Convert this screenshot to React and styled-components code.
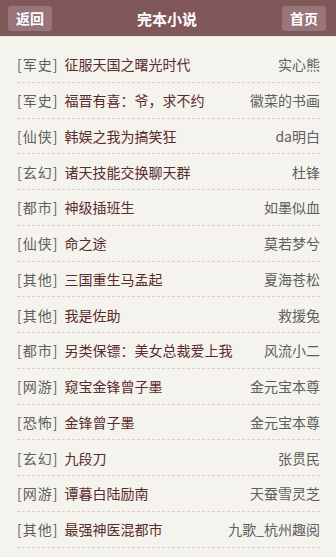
import React from 'react';
import styled, { createGlobalStyle } from 'styled-components';

const books = [
  ['军史', '征服天国之曙光时代', '实心熊'],
  ['军史', '福晋有喜：爷，求不约', '徽菜的书画'],
  ['仙侠', '韩娱之我为搞笑狂', 'da明白'],
  ['玄幻', '诸天技能交换聊天群', '杜锋'],
  ['都市', '神级插班生', '如墨似血'],
  ['仙侠', '命之途', '莫若梦兮'],
  ['其他', '三国重生马孟起', '夏海苍松'],
  ['其他', '我是佐助', '救援兔'],
  ['都市', '另类保镖：美女总裁爱上我', '风流小二'],
  ['网游', '窥宝金锋曾子墨', '金元宝本尊'],
  ['恐怖', '金锋曾子墨', '金元宝本尊'],
  ['玄幻', '九段刀', '张贯民'],
  ['网游', '谭暮白陆励南', '天蚕雪灵芝'],
  ['其他', '最强神医混都市', '九歌_杭州趣阅'],
  ['仙侠', '神级修炼系统', '苏七少'],
];

const GlobalStyle = createGlobalStyle`
  html, body {
    margin: 0;
    padding: 0;
    background: #f5f3ee;
  }
  body {
    font-family: 'Noto Sans CJK SC', 'Noto Sans', sans-serif;
  }
`;

const Page = styled.div`
  width: 336px;
  height: 557px;
  overflow: hidden;
  background: #f5f3ee;
`;

const Header = styled.header`
  display: flex;
  align-items: center;
  justify-content: space-between;
  height: 36px;
  padding: 0 10px 0 8px;
  background: #81585a;
  border-bottom: 1px solid #efe3df;
  box-sizing: content-box;
`;

const NavButton = styled.a`
  display: flex;
  align-items: center;
  justify-content: center;
  width: 44px;
  height: 25px;
  border-radius: 3px;
  background: #98757a;
  color: #fff;
  font-size: 14px;
  font-weight: 700;
  text-decoration: none;
`;

const Title = styled.h1`
  margin: 0;
  color: #fff;
  font-size: 15px;
  font-weight: 700;
`;

const List = styled.ul`
  list-style: none;
  margin: 0;
  padding: 10px 16px 0 17px;
`;

const Row = styled.li`
  display: flex;
  align-items: center;
  height: 35.75px;
  box-sizing: border-box;
  border-bottom: 1px dashed #e4cccc;
  font-size: 14px;
  line-height: 20px;
  white-space: nowrap;
`;

const Category = styled.span`
  color: #5e5e5e;
  margin-right: 6px;
  letter-spacing: 1px;
`;

const BookName = styled.span`
  flex: 1;
  color: #5a2b2b;
`;

const Author = styled.span`
  color: #5e5e5e;
  margin-left: 8px;
`;

export default function App() {
  return (
    <Page>
      <GlobalStyle />
      <Header>
        <NavButton>返回</NavButton>
        <Title>完本小说</Title>
        <NavButton>首页</NavButton>
      </Header>
      <List>
        {books.map(([cat, name, author], i) => (
          <Row key={i}>
            <Category>[{cat}]</Category>
            <BookName>{name}</BookName>
            <Author>{author}</Author>
          </Row>
        ))}
      </List>
    </Page>
  );
}
